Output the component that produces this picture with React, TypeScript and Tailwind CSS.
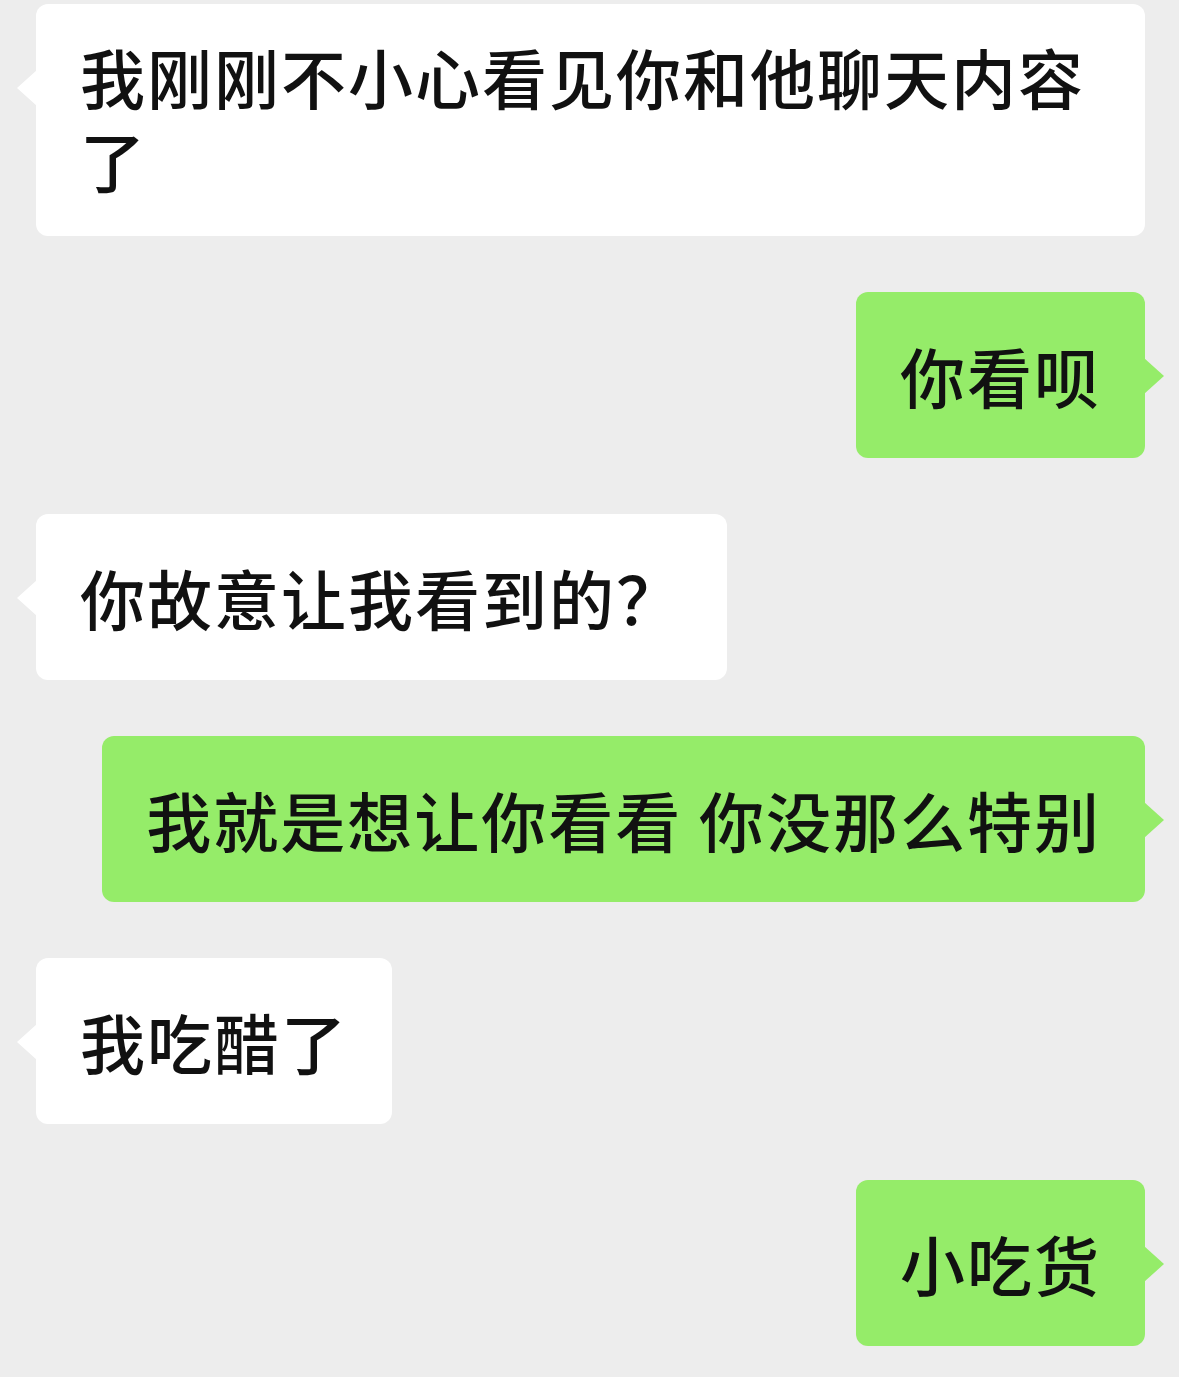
const messages = [
  { from: "them", text: "我刚刚不小心看见你和他聊天内容了", pad: "pt-[31px] pb-[35px]" },
  { from: "me", text: "你看呗", pad: "pt-[42px] pb-[41px]" },
  { from: "them", text: "你故意让我看到的？", pad: "pt-[42px] pb-[41px]" },
  { from: "me", text: "我就是想让你看看 你没那么特别", pad: "pt-[42px] pb-[41px]" },
  { from: "them", text: "我吃醋了", pad: "pt-[42px] pb-[41px]" },
  { from: "me", text: "小吃货", pad: "pt-[42px] pb-[41px]" },
];

const Bubble = ({ from, text, pad }: { from: string; text: string; pad: string }) => {
  const mine = from === "me";
  return (
    <div className={mine ? "flex justify-end" : "flex justify-start"}>
      <div
        className={
          (mine
            ? "relative w-fit max-w-full rounded-[12px] bg-[#95ec69] px-[44px] "
            : "relative w-fit max-w-full rounded-[12px] bg-white px-[44px] ") + pad
        }
      >
        {/* tail */}
        {mine ? (
          <span className="absolute top-[84px] -right-[19px] -translate-y-1/2 border-y-[18px] border-l-[20px] border-y-transparent border-l-[#95ec69]" />
        ) : (
          <span className="absolute top-[84px] -left-[19px] -translate-y-1/2 border-y-[18px] border-r-[20px] border-y-transparent border-r-white" />
        )}
        <p className="text-[65px] leading-[83px] tracking-[2px] font-medium text-[#111111] break-all">
          {text}
        </p>
      </div>
    </div>
  );
};

const App = () => {
  return (
    <main
      className="min-h-screen bg-[#ededed] pl-[36px] pr-[34px] pt-[4px] pb-[34px] flex flex-col gap-[56px]"
      style={{ fontFamily: '"Noto Sans CJK SC", "Noto Sans", sans-serif' }}
    >
      {messages.map((m, i) => (
        <Bubble key={i} from={m.from} text={m.text} pad={m.pad} />
      ))}
    </main>
  );
};

export default App;
